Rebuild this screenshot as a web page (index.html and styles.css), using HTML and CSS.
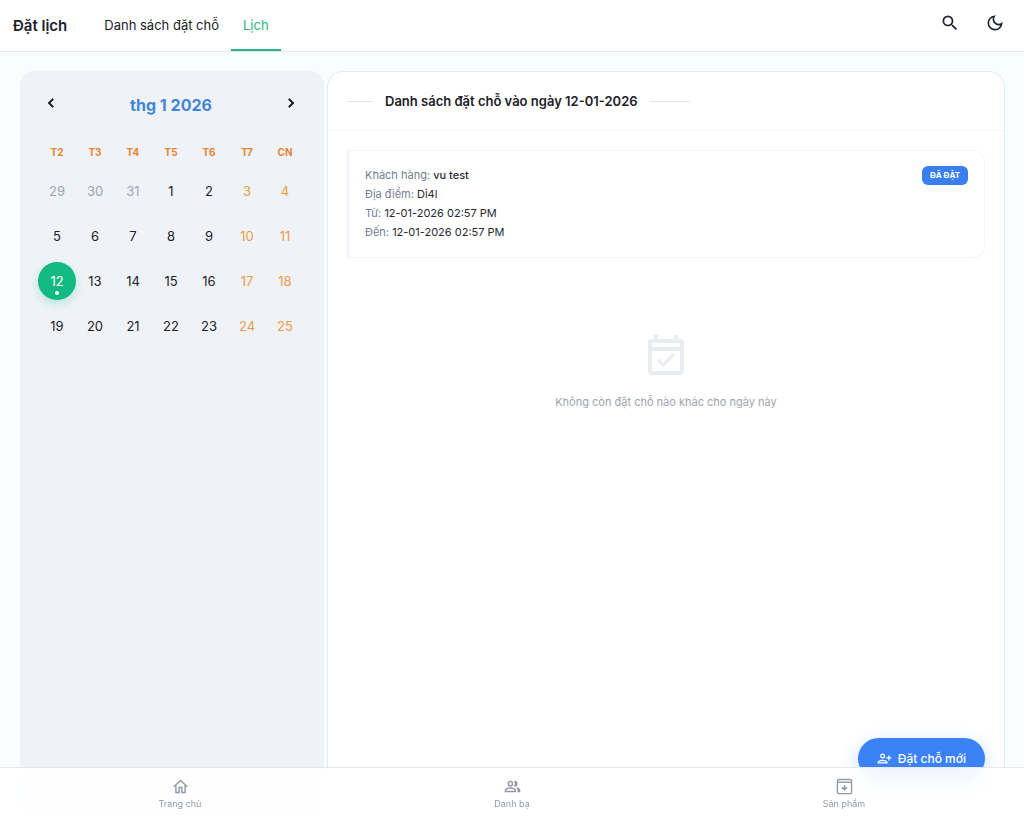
FILE: index.html
```html
<!DOCTYPE html>
<html lang="vi">
<head>
<meta charset="utf-8">
<meta name="viewport" content="width=device-width, initial-scale=1">
<title>Đặt lịch</title>
<link rel="stylesheet" href="styles.css">
</head>
<body>
<header class="topbar">
  <h1 class="brand">Đặt lịch</h1>
  <nav class="tabs">
    <a class="tab" href="#list">Danh sách đặt chỗ</a>
    <a class="tab tab-active" href="#calendar" aria-current="page">Lịch</a>
  </nav>
  <div class="tools">
    <button class="icon-btn" type="button" aria-label="Tìm kiếm">
      <svg class="icon-tool" viewBox="0 0 24 24" fill="currentColor"><path d="M15.5 14h-.79l-.28-.27A6.47 6.47 0 0 0 16 9.5 6.5 6.5 0 1 0 9.5 16c1.61 0 3.09-.59 4.23-1.57l.27.28v.79l5 4.99L20.49 19l-4.99-5zm-6 0C7.01 14 5 11.99 5 9.5S7.01 5 9.5 5 14 7.01 14 9.5 11.99 14 9.5 14z"/></svg>
    </button>
    <button class="icon-btn" type="button" aria-label="Chế độ tối">
      <svg class="icon-tool" viewBox="0 0 24 24" fill="currentColor"><path d="M9.37 5.51A7.35 7.35 0 0 0 9.1 7.5c0 4.08 3.32 7.4 7.4 7.4.68 0 1.35-.09 1.99-.27A7.014 7.014 0 0 1 12 19c-3.86 0-7-3.14-7-7 0-2.93 1.81-5.45 4.37-6.49zM12 3a9 9 0 1 0 9 9c0-.46-.04-.92-.1-1.36a5.389 5.389 0 0 1-4.4 2.26 5.403 5.403 0 0 1-3.14-9.8c-.44-.06-.9-.1-1.36-.1z"/></svg>
    </button>
  </div>
</header>

<main class="content">
  <aside class="calendar">
    <div class="month-bar">
      <button class="icon-btn" type="button" aria-label="Tháng trước"><svg class="icon-chevron" viewBox="0 0 24 24" fill="currentColor" stroke="currentColor" stroke-width="1"><path d="M15.41 7.41 14 6l-6 6 6 6 1.41-1.41L10.83 12z"/></svg></button>
      <h2 class="month">thg 1 2026</h2>
      <button class="icon-btn" type="button" aria-label="Tháng sau"><svg class="icon-chevron" viewBox="0 0 24 24" fill="currentColor" stroke="currentColor" stroke-width="1"><path d="M10 6 8.59 7.41 13.17 12l-4.58 4.59L10 18l6-6z"/></svg></button>
    </div>
    <table class="days">
      <thead>
        <tr><th>T2</th><th>T3</th><th>T4</th><th>T5</th><th>T6</th><th>T7</th><th>CN</th></tr>
      </thead>
      <tbody>
        <tr><td><button class="day muted">29</button></td><td><button class="day muted">30</button></td><td><button class="day muted">31</button></td><td><button class="day">1</button></td><td><button class="day">2</button></td><td><button class="day weekend">3</button></td><td><button class="day weekend">4</button></td></tr>
        <tr><td><button class="day">5</button></td><td><button class="day">6</button></td><td><button class="day">7</button></td><td><button class="day">8</button></td><td><button class="day">9</button></td><td><button class="day weekend">10</button></td><td><button class="day weekend">11</button></td></tr>
        <tr><td><button class="day selected" aria-pressed="true">12</button></td><td><button class="day">13</button></td><td><button class="day">14</button></td><td><button class="day">15</button></td><td><button class="day">16</button></td><td><button class="day weekend">17</button></td><td><button class="day weekend">18</button></td></tr>
        <tr><td><button class="day">19</button></td><td><button class="day">20</button></td><td><button class="day">21</button></td><td><button class="day">22</button></td><td><button class="day">23</button></td><td><button class="day weekend">24</button></td><td><button class="day weekend">25</button></td></tr>
      </tbody>
    </table>
  </aside>

  <section class="panel">
    <div class="panel-head">
      <span class="rule rule-start"></span>
      <h2 class="panel-title">Danh sách đặt chỗ vào ngày 12-01-2026</h2>
      <span class="rule rule-end"></span>
    </div>
    <div class="panel-body">
      <article class="booking">
        <div class="details">
          <p>Khách hàng: <strong class="value">vu test</strong></p>
          <p>Địa điểm: <span class="value">Di4l</span></p>
          <p>Từ: <span class="value">12-01-2026 02:57 PM</span></p>
          <p>Đến: <span class="value">12-01-2026 02:57 PM</span></p>
        </div>
        <span class="badge">ĐÃ ĐẶT</span>
      </article>
      <div class="empty">
        <svg class="icon-empty" viewBox="0 0 24 24" fill="currentColor" aria-hidden="true"><path d="M16.53 11.06 15.47 10l-4.88 4.88-2.12-2.12-1.06 1.06L10.59 17l5.94-5.94zM19 3h-1V1h-2v2H8V1H6v2H5a2 2 0 0 0-2 2v14a2 2 0 0 0 2 2h14a2 2 0 0 0 2-2V5a2 2 0 0 0-2-2zm0 16H5V9h14v10zM19 7H5V5h14v2z"/></svg>
        <p>Không còn đặt chỗ nào khác cho ngày này</p>
      </div>
    </div>
    <div class="actions">
      <button class="new-booking" type="button">
        <svg class="icon-add" viewBox="0 0 24 24" fill="currentColor"><path d="M9 12a4 4 0 1 0 0-8 4 4 0 0 0 0 8zm0-6a2 2 0 1 1 0 4 2 2 0 0 1 0-4zm0 8c-2.670 0-8 1.340-8 4v2h16v-2c0-2.660-5.330-4-8-4zm-6 4c.22-.72 3.310-2 6-2s5.800 1.290 6 2H3zM20 10V7h-2v3h-3v2h3v3h2v-3h3v-2z"/></svg>
        <span>Đặt chỗ mới</span>
      </button>
    </div>
  </section>
</main>

<nav class="bottom-nav">
  <a class="nav-item" href="#home">
    <svg class="icon-nav" viewBox="0 0 24 24" fill="none" stroke="currentColor" stroke-width="2"><path d="M2.500 12.500 12 3.500l9.500 9M5.500 10v10.500h4.500v-7h4v7h4.500V10"/></svg>
    <span>Trang chủ</span>
  </a>
  <a class="nav-item" href="#contacts">
    <svg class="icon-nav" viewBox="0 0 24 24" fill="currentColor"><path d="M9 4a4 4 0 1 0 0 8 4 4 0 0 0 0-8zm0 2a2 2 0 1 1 0 4 2 2 0 0 1 0-4zM9 13c-2.700 0-8 1.300-8 4v3h16v-3c0-2.700-5.300-4-8-4zm6 5H3v-1c0-.7 3.100-2 6-2s6 1.300 6 2v1zM15 12a4 4 0 0 0 0-8c-.5 0-.9.100-1.300.200a6 6 0 0 1 0 7.600c.4.100.8.200 1.300.200zM16.700 13.200A5 5 0 0 1 19 17v3h4v-3c0-2.200-3.500-3.400-6.300-3.800z"/></svg>
    <span>Danh bạ</span>
  </a>
  <a class="nav-item" href="#products">
    <svg class="icon-nav" viewBox="0 0 24 24" fill="none" stroke="currentColor" stroke-width="2"><rect x="2" y="2" width="20" height="20" rx="2"/><path d="M2 6h20" stroke-width="2"/><path d="M12 10v6M8 14h8"/><path d="m8 14 4 4 4-4z" fill="currentColor" stroke="none"/></svg>
    <span>Sản phẩm</span>
  </a>
</nav>
</body>
</html>
```
FILE: styles.css
```css
* { box-sizing: border-box; }

body {
  margin: 0;
  height: 100vh;
  display: flex;
  flex-direction: column;
  overflow: hidden;
  background: #f8fdff;
  color: #1d2129;
  font-family: Inter, "Noto Sans", sans-serif;
  font-size: 12px;
}

h1, h2, p { margin: 0; }
a { color: inherit; text-decoration: none; }
button { border: 0; padding: 0; background: none; color: inherit; font: inherit; cursor: pointer; }
svg { display: block; flex: none; }

.topbar {
  flex: none;
  height: 52px;
  display: flex;
  padding: 0 16px 0 13px;
  background: #fff;
  border-bottom: 1px solid #e5e9f0;
}
.brand { align-self: center; font-size: 15px; font-weight: 600; line-height: 20px; }
.tabs { display: flex; margin-left: 25px; }
.tab {
  display: flex;
  align-items: center;
  padding: 0 12px;
  font-size: 13px;
  border-bottom: 2px solid transparent;
}
.tab-active { color: #1fb582; border-bottom-color: #27b488; }
.tools { display: flex; align-items: center; gap: 19px; margin-left: auto; padding-bottom: 5px; }
.icon-btn { display: grid; place-items: center; width: 26px; height: 26px; }
.icon-tool { width: 20px; height: 20px; }

.content { flex: 1; min-height: 0; display: flex; gap: 3px; padding: 19px 19px 0 20px; }

.calendar { flex: 0 0 304px; padding: 19px 20px 0 18px; background: #eff3f8; border-radius: 14px; }
.month-bar { display: flex; align-items: flex-start; justify-content: space-between; height: 45px; }
.month { font-size: 16px; line-height: 30px; font-weight: 700; color: #4285d8; }
.icon-chevron { width: 18px; height: 18px; }
.days { width: 266px; table-layout: fixed; border-collapse: collapse; }
.days th { height: 33px; padding: 0; font-size: 10px; font-weight: 700; color: #e68431; }
.days td { height: 45px; padding: 0; text-align: center; }
.day {
  display: flex;
  align-items: center;
  justify-content: center;
  width: 38px;
  height: 38px;
  border-radius: 50%;
  font-size: 13px;
}
.muted { color: #9ca5b2; }
.weekend { color: #eb9b45; }
.selected {
  position: relative;
  background: #12b981;
  color: #fff;
  box-shadow: 0 4px 10px #12b98140;
}
.selected::after {
  content: "";
  position: absolute;
  bottom: 5px;
  left: 50%;
  width: 4px;
  height: 4px;
  margin-left: -2px;
  border-radius: 50%;
  background: #fff;
}

.panel {
  flex: 1;
  min-width: 0;
  display: flex;
  flex-direction: column;
  background: #fff;
  border: 1px solid #e5eaee;
  border-bottom: 0;
  border-radius: 16px 16px 0 0;
}
.panel-head {
  display: flex;
  align-items: center;
  gap: 12px;
  height: 59px;
  padding: 0 19px;
  border-bottom: 1px solid #f6f7f9;
}
.panel-title { font-size: 13px; line-height: 20px; font-weight: 600; }
.rule { height: 1px; background: #e4e7eb; }
.rule-start { width: 26px; }
.rule-end { width: 40px; }
.panel-body { flex: 1; padding: 19px; }

.booking {
  display: flex;
  justify-content: space-between;
  align-items: flex-start;
  padding: 15px 16px;
  border: 1px solid #f5f6f8;
  border-left: 2px solid #eff2f9;
  border-radius: 2px 12px 12px 2px;
}
.details { color: #748091; line-height: 19px; font-size: 11px; }
.value { color: #262a31; font-weight: 400; }
strong.value { font-weight: 500; }
.badge {
  padding: 0 8px;
  border-radius: 6px;
  background: #397ff0;
  color: #fff;
  font-size: 8px;
  line-height: 19px;
  font-weight: 700;
}
.empty {
  display: flex;
  flex-direction: column;
  align-items: center;
  gap: 12px;
  padding-top: 75px;
  color: #9da5af;
  font-size: 11px;
  line-height: 18px;
}
.icon-empty { width: 48px; height: 48px; color: #e9edf1; }

.actions { display: flex; justify-content: flex-end; padding: 0 19px 40px; }
.new-booking {
  display: flex;
  align-items: center;
  gap: 6px;
  height: 41px;
  padding: 0 19px;
  border-radius: 21px;
  background: #3b82f6;
  color: #fff;
  font-weight: 500;
  box-shadow: 0 6px 18px #3b82f64d;
}
.icon-add { width: 15px; height: 15px; }

.bottom-nav {
  position: fixed;
  inset: auto 0 0;
  display: grid;
  grid-template-columns: repeat(3, 1fr);
  height: 52px;
  padding: 0 14px;
  background: #ffffffe8;
  border-top: 1px solid #e5e9ec;
  backdrop-filter: blur(10px);
}
.nav-item {
  display: flex;
  flex-direction: column;
  align-items: center;
  justify-content: center;
  gap: 3px;
  color: #9299a8;
  font-size: 9px;
  line-height: 12px;
}
.icon-nav { width: 17px; height: 17px; }
```
